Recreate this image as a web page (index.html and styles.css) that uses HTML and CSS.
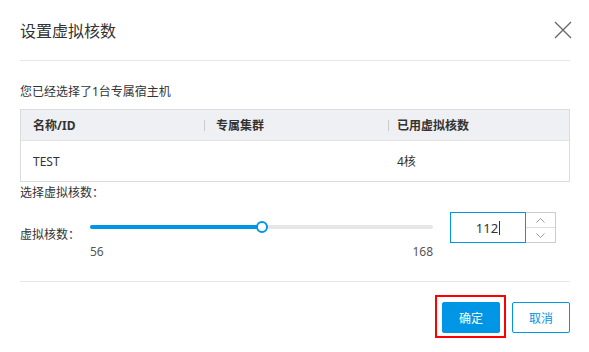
FILE: index.html
```html
<!DOCTYPE html>
<html lang="zh-CN">
<head>
  <meta charset="UTF-8" />
  <meta name="viewport" content="width=device-width, initial-scale=1.0" />
  <title>设置虚拟核数</title>
  <link rel="stylesheet" href="styles.css">
</head>
<body>
  <div class="dialog">
    <div class="dialog-header">
      <span class="dialog-title">设置虚拟核数</span>
      <span class="close-btn">
        <svg width="18" height="18" viewBox="0 0 18 18">
          <path d="M1 1 L17 17 M17 1 L1 17" stroke="#666" stroke-width="1.3" fill="none" />
        </svg>
      </span>
    </div>

    <div class="dialog-body">
      <p class="hint first">您已经选择了1台专属宿主机</p>

      <div class="host-table">
        <div class="host-row host-head">
          <div class="cell">名称/ID</div>
          <div class="cell">专属集群</div>
          <div class="cell">已用虚拟核数</div>
        </div>
        <div class="host-row host-body">
          <div class="cell">TEST</div>
          <div class="cell"></div>
          <div class="cell">4核</div>
        </div>
      </div>

      <p class="hint section-label">选择虚拟核数：</p>

      <div class="core-row">
        <label class="core-label">虚拟核数：</label>
        <div class="slider">
          <div class="slider-rail">
            <div class="slider-fill" style="width: 50%"></div>
            <span class="slider-thumb" style="left: 50%"></span>
          </div>
          <div class="slider-scale">
            <span>56</span>
            <span>168</span>
          </div>
        </div>
        <div class="number-input">
          <div class="number-field">112<span class="caret"></span></div>
          <div class="number-spin">
            <span class="spin-btn">
              <svg width="9" height="5" viewBox="0 0 9 5"><path d="M0.5 4.5 L4.5 0.5 L8.5 4.5" stroke="#999" fill="none" /></svg>
            </span>
            <span class="spin-btn">
              <svg width="9" height="5" viewBox="0 0 9 5"><path d="M0.5 0.5 L4.5 4.5 L8.5 0.5" stroke="#999" fill="none" /></svg>
            </span>
          </div>
        </div>
      </div>
    </div>

    <div class="dialog-footer">
      <span class="marked">
        <button class="btn btn-primary">确定</button>
      </span>
      <button class="btn btn-default">取消</button>
    </div>
  </div>
</body>
</html>
```

FILE: styles.css
```css
body {
  margin: 0;
  background: #fff;
  color: #333;
  font-family: "Noto Sans", "Noto Sans CJK SC", sans-serif;
  font-size: 12px;
}

.dialog {
  padding: 0 19px 19px 20px;
}

/* header */
.dialog-header {
  display: flex;
  align-items: center;
  justify-content: space-between;
  height: 60px;
  border-bottom: 1px solid #e6e6e6;
}

.dialog-title {
  font-size: 16px;
  color: #333;
}

.close-btn {
  display: flex;
  margin-right: -2px;
  cursor: pointer;
}

/* body */
.hint {
  margin: 0;
  line-height: 16px;
}

.hint.first {
  padding-top: 23px;
}

.section-label {
  margin-top: 3px;
}

.host-table {
  margin-top: 9px;
  border: 1px solid #dcdcdc;
}

.host-row {
  display: grid;
  grid-template-columns: 183px 181px 1fr;
}

.host-head {
  height: 30px;
  background: #eff0f4;
  border-bottom: 1px solid #e2e2e2;
  font-weight: bold;
}

.host-body {
  height: 40px;
}

.cell {
  position: relative;
  display: flex;
  align-items: center;
  padding-left: 12px;
}

.host-head .cell + .cell::before {
  content: "";
  position: absolute;
  left: 0;
  top: 10px;
  width: 1px;
  height: 11px;
  background: #ccc;
}

.host-head .cell:last-child::before {
  left: 3px;
}

/* slider row */
.core-row {
  display: flex;
  align-items: flex-start;
  margin-top: 11px;
}

.core-label {
  width: 70px;
  margin-top: 15px;
  line-height: 16px;
}

.slider {
  width: 343px;
}

.slider-rail {
  position: relative;
  height: 4px;
  margin-top: 13px;
  background: #e6e6e6;
  border-radius: 2px;
}

.slider-fill {
  height: 100%;
  background: #0095e5;
  border-radius: 2px;
}

.slider-thumb {
  position: absolute;
  top: 50%;
  width: 12px;
  height: 12px;
  box-sizing: border-box;
  border: 2px solid #0095e5;
  border-radius: 50%;
  background: #fff;
  transform: translate(-50%, -50%);
}

.slider-scale {
  display: flex;
  justify-content: space-between;
  margin-top: 15px;
  line-height: 16px;
  color: #555;
}

.number-input {
  display: flex;
  height: 31px;
  margin-left: 17px;
}

.number-field {
  display: flex;
  align-items: center;
  justify-content: center;
  width: 76px;
  box-sizing: border-box;
  border: 1px solid #0095e5;
  font-size: 13px;
  color: #333;
}

.caret {
  display: inline-block;
  width: 1px;
  height: 14px;
  margin-left: 1px;
  background: #333;
}

.number-spin {
  display: flex;
  flex-direction: column;
  width: 30px;
  box-sizing: border-box;
  border: 1px solid #ccc;
  border-left: none;
}

.spin-btn {
  flex: 1;
  display: flex;
  align-items: center;
  justify-content: center;
}

.spin-btn:first-child {
  border-bottom: 1px solid #ddd;
}

/* footer */
.dialog-footer {
  display: flex;
  justify-content: flex-end;
  gap: 12px;
  margin-top: 21px;
  padding-top: 20px;
  border-top: 1px solid #e6e6e6;
}

.btn {
  display: block;
  height: 31px;
  width: 58px;
  padding: 0;
  font-family: inherit;
  font-size: 12px;
  border: 1px solid #0095e5;
  border-radius: 2px;
  cursor: pointer;
}

.btn-primary {
  background: #0095e5;
  color: #fff;
}

.btn-default {
  background: #fff;
  color: #0095e5;
}

/* red highlight box around the confirm button */
.marked {
  position: relative;
  display: flex;
}

.marked::after {
  content: "";
  position: absolute;
  left: -7px;
  right: -6px;
  top: -7px;
  bottom: -5px;
  border: 2px solid #f00;
  pointer-events: none;
}
```
